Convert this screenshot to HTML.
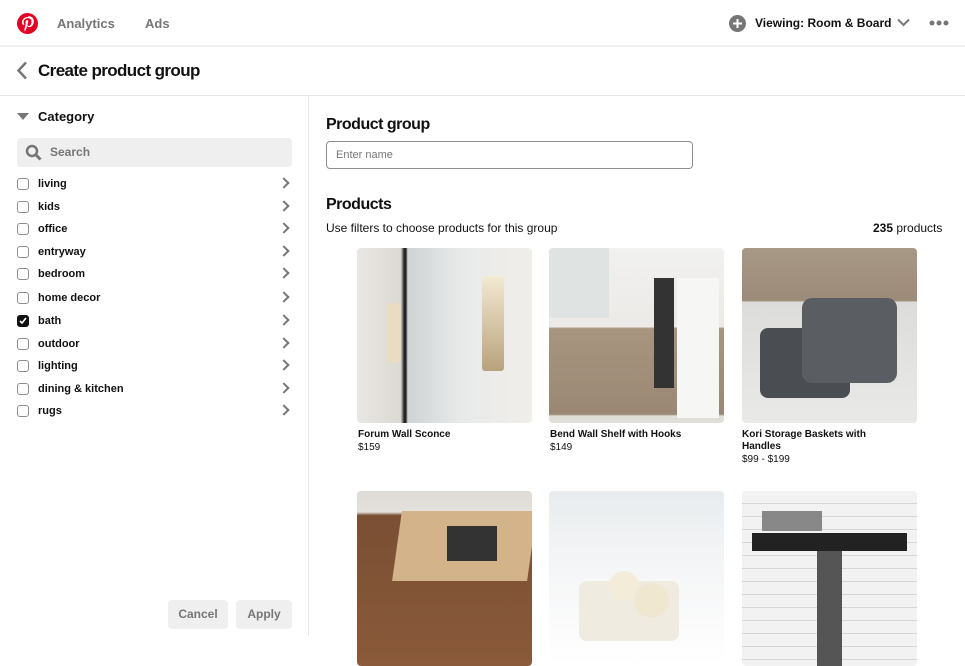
<!DOCTYPE html>
<html><head><style>
*{margin:0;padding:0;box-sizing:border-box}
body{width:965px;height:636px;overflow:hidden;background:#fff;font-family:"Liberation Sans",sans-serif;color:#111;position:relative}
.abs{position:absolute}
.top{height:47px;border-bottom:2px solid #efefef;width:965px}
.nav{font-weight:bold;font-size:13px;color:#767676;top:16px}
.hdr{top:47px;height:49px;width:965px;border-bottom:1px solid #e6e6e6}
.side{top:96px;left:0;width:309px;height:540px;border-right:1px solid #e6e6e6}
.item{left:17px;font-size:11px;font-weight:bold;height:14px;width:275px}
.cb{position:absolute;left:0;top:1px;width:12px;height:12px;border:1px solid #8e8e8e;border-radius:3px}
.item span{position:absolute;left:21px;top:1px}
.chev{position:absolute;right:4px;top:2px;width:8px;height:8px;border-right:2px solid #767676;border-top:2px solid #767676;transform:rotate(45deg)}
.card{width:175px;height:175px;border-radius:4px;overflow:hidden}
.nm{font-size:10px;font-weight:bold}
.pr{font-size:10px}
</style></head><body>
<div class="abs top"></div>
<svg class="abs" style="left:17px;top:13px" width="21" height="21" viewBox="0 0 24 24"><circle cx="12" cy="12" r="12" fill="#e60023"/><path d="M12.5 4.5c-4.5 0-6.8 3.2-6.8 5.9 0 1.6.6 3 1.9 3.5.2.1.4 0 .5-.2l.2-.8c.1-.2 0-.3-.1-.5-.4-.5-.6-1.1-.6-1.9 0-2.5 1.9-4.7 4.9-4.7 2.7 0 4.1 1.6 4.1 3.8 0 2.9-1.3 5.3-3.1 5.3-1 0-1.8-.8-1.5-1.9.3-1.3.9-2.6.9-3.5 0-.8-.4-1.4-1.3-1.4-1 0-1.9 1.1-1.9 2.5 0 .9.3 1.5.3 1.5l-1.2 5.2c-.4 1.5-.1 3.4 0 3.6h.2c.1-.2 1.4-1.8 1.8-3.3l.7-2.7c.3.7 1.4 1.2 2.4 1.2 3.2 0 5.4-2.9 5.4-6.8 0-3-2.5-5.8-6.3-5.8z" fill="#fff"/></svg>
<div class="abs nav" style="left:57px">Analytics</div>
<div class="abs nav" style="left:145px">Ads</div>
<svg class="abs" style="left:729px;top:15px" width="17" height="17" viewBox="0 0 17 17"><circle cx="8.5" cy="8.5" r="8.5" fill="#767676"/><path d="M8.5 4v9M4 8.5h9" stroke="#fff" stroke-width="2"/></svg>
<div class="abs" style="left:755px;top:16px;font-size:12px;font-weight:bold">Viewing: Room &amp; Board</div>
<svg class="abs" style="left:897px;top:18px" width="13" height="9" viewBox="0 0 13 9"><path d="M1 1.5l5.5 5.5 5.5-5.5" stroke="#767676" stroke-width="2" fill="none"/></svg>
<svg class="abs" style="left:929px;top:20px" width="20" height="6"><circle cx="3" cy="3" r="2.5" fill="#767676"/><circle cx="10" cy="3" r="2.5" fill="#767676"/><circle cx="17" cy="3" r="2.5" fill="#767676"/></svg>
<div class="abs hdr"></div>
<svg class="abs" style="left:16px;top:61px" width="12" height="19" viewBox="0 0 12 19"><path d="M10 1.5L2.5 9.5l7.5 8" stroke="#767676" stroke-width="2.5" fill="none"/></svg>
<div class="abs" style="left:38px;top:61px;font-size:17px;font-weight:bold;letter-spacing:-0.6px">Create product group</div>
<div class="abs side"></div>
<svg class="abs" style="left:17px;top:113px" width="12" height="7"><path d="M0 0h12L6 7z" fill="#767676"/></svg>
<div class="abs" style="left:38px;top:109px;font-size:13px;font-weight:bold">Category</div>
<div class="abs" style="left:17px;top:138px;width:275px;height:29px;background:#efefef;border-radius:4px"></div>
<svg class="abs" style="left:25px;top:144px" width="17" height="17" viewBox="0 0 17 17"><circle cx="7" cy="7" r="5" stroke="#767676" stroke-width="2.5" fill="none"/><path d="M10.5 10.5l5 5" stroke="#767676" stroke-width="3"/></svg>
<div class="abs" style="left:50px;top:145px;font-size:12px;font-weight:bold;color:#767676">Search</div>
<div class="abs item" style="top:177px"><div class="cb"></div><span>living</span><div class="chev"></div></div>
<div class="abs item" style="top:200px"><div class="cb"></div><span>kids</span><div class="chev"></div></div>
<div class="abs item" style="top:222px"><div class="cb"></div><span>office</span><div class="chev"></div></div>
<div class="abs item" style="top:245px"><div class="cb"></div><span>entryway</span><div class="chev"></div></div>
<div class="abs item" style="top:267px"><div class="cb"></div><span>bedroom</span><div class="chev"></div></div>
<div class="abs item" style="top:291px"><div class="cb"></div><span>home decor</span><div class="chev"></div></div>
<div class="abs item" style="top:314px"><div class="cb" style="background:#111;border-color:#111"><svg style="position:absolute;left:1px;top:1px" width="8" height="8"><path d="M1 4l2 2 4-5" stroke="#fff" stroke-width="1.6" fill="none"/></svg></div><span>bath</span><div class="chev"></div></div>
<div class="abs item" style="top:337px"><div class="cb"></div><span>outdoor</span><div class="chev"></div></div>
<div class="abs item" style="top:359px"><div class="cb"></div><span>lighting</span><div class="chev"></div></div>
<div class="abs item" style="top:382px"><div class="cb"></div><span>dining &amp; kitchen</span><div class="chev"></div></div>
<div class="abs item" style="top:404px"><div class="cb"></div><span>rugs</span><div class="chev"></div></div>
<div class="abs" style="left:168px;top:600px;width:60px;height:29px;background:#efefef;border-radius:4px;color:#767676;font-size:12px;font-weight:bold;text-align:center;line-height:29px">Cancel</div>
<div class="abs" style="left:236px;top:600px;width:56px;height:29px;background:#efefef;border-radius:4px;color:#767676;font-size:12px;font-weight:bold;text-align:center;line-height:29px">Apply</div>

<div class="abs" style="left:326px;top:116px;font-size:16px;font-weight:bold;letter-spacing:-0.5px">Product group</div>
<div class="abs" style="left:326px;top:141px;width:367px;height:28px;border:1px solid #8e8e8e;border-radius:4px;font-size:11px;color:#767676;padding:7px 9px">Enter name</div>
<div class="abs" style="left:326px;top:196px;font-size:16px;font-weight:bold;letter-spacing:-0.5px">Products</div>
<div class="abs" style="left:326px;top:221px;font-size:12px">Use filters to choose products for this group</div>
<div class="abs" style="left:873px;top:221px;font-size:12px"><b>235</b> products</div>

<div class="abs card" style="left:357px;top:248px;background:linear-gradient(90deg,#e9e7e3 0%,#dcd9d4 25%,#222 27%,#2a2a2a 28%,#cfd3d4 29%,#e8eaea 60%,#f0eeea 100%)">
<div class="abs" style="left:30px;top:55px;width:14px;height:60px;background:#e9dcc0;border-radius:3px"></div>
<div class="abs" style="left:125px;top:28px;width:22px;height:95px;background:linear-gradient(#f3ead2,#b8a27c);border-radius:3px"></div></div>
<div class="abs nm" style="left:358px;top:429px">Forum Wall Sconce</div><div class="abs pr" style="left:358px;top:442px">$159</div>

<div class="abs card" style="left:549px;top:248px;background:linear-gradient(#f1f1f0 0%,#eceae7 45%,#a89580 46%,#9a8874 95%,#e0ded9 96%)">
<div class="abs" style="left:0;top:0;width:60px;height:70px;background:#dfe3e2"></div>
<div class="abs" style="left:105px;top:30px;width:20px;height:110px;background:#333"></div>
<div class="abs" style="left:128px;top:30px;width:42px;height:140px;background:#f6f6f4"></div></div>
<div class="abs nm" style="left:550px;top:429px">Bend Wall Shelf with Hooks</div><div class="abs pr" style="left:550px;top:442px">$149</div>

<div class="abs card" style="left:742px;top:248px;background:linear-gradient(#a89886 0%,#9c8b78 30%,#dcdcda 31%,#e9e9e7 100%)">
<div class="abs" style="left:18px;top:80px;width:90px;height:70px;background:#4a4d52;border-radius:8px"></div>
<div class="abs" style="left:60px;top:50px;width:95px;height:85px;background:#5a5d62;border-radius:10px"></div></div>
<div class="abs nm" style="left:742px;top:429px;line-height:12px">Kori Storage Baskets with<br>Handles</div><div class="abs pr" style="left:742px;top:454px">$99 - $199</div>

<div class="abs card" style="left:357px;top:491px;background:linear-gradient(#dedad6 0%,#e4e0dc 12%,#7a4f33 14%,#8a5a3a 100%)">
<div class="abs" style="left:40px;top:20px;width:135px;height:70px;background:#d3b48a;transform:skewX(-8deg)"></div>
<div class="abs" style="left:90px;top:35px;width:50px;height:35px;background:#333"></div></div>

<div class="abs card" style="left:549px;top:491px;background:linear-gradient(#e8ecee 0%,#f4f5f6 40%,#ffffff 100%)">
<div class="abs" style="left:30px;top:90px;width:100px;height:60px;background:#f0ebe0;border-radius:8px"></div>
<div class="abs" style="left:60px;top:80px;width:30px;height:30px;background:#f3ecd8;border-radius:50%"></div>
<div class="abs" style="left:85px;top:92px;width:35px;height:35px;background:#efe7d0;border-radius:50%"></div></div>

<div class="abs card" style="left:742px;top:491px;background:repeating-linear-gradient(#f2f2f2 0 12px,#d6d6d6 12px 13px)">
<div class="abs" style="left:10px;top:42px;width:155px;height:18px;background:#222"></div>
<div class="abs" style="left:75px;top:60px;width:25px;height:115px;background:#555"></div>
<div class="abs" style="left:20px;top:20px;width:60px;height:20px;background:#888"></div></div>
</body></html>
